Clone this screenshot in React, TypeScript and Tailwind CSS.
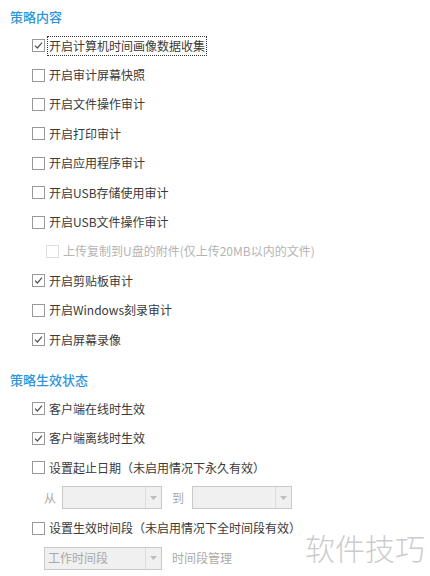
import React from "react";

const font = { fontFamily: '"Microsoft YaHei", "Noto Sans CJK SC", "Noto Sans", sans-serif' };

type CheckProps = {
  label: string;
  checked?: boolean;
  disabled?: boolean;
  focused?: boolean;
  indent?: boolean;
};

const Box = ({ checked, disabled }: { checked?: boolean; disabled?: boolean }) => (
  <span
    className={
      "relative inline-flex h-[13px] w-[13px] shrink-0 items-center justify-center border bg-white " +
      (disabled ? "border-[#dedede]" : "border-[#999999]")
    }
  >
    {checked && (
      <svg viewBox="0 0 11 11" className="h-[11px] w-[11px]">
        <path d="M2 5.6 L4.4 8 L9 2.6" fill="none" stroke="#505050" strokeWidth="1.2" />
      </svg>
    )}
  </span>
);

const CheckRow = ({ label, checked, disabled, focused, indent }: CheckProps) => (
  <div className={"flex h-[29.4px] items-center " + (indent ? "pl-[46px]" : "pl-[32px]")}>
    <Box checked={checked} disabled={disabled} />
    <span
      className={
        "ml-[2px] px-[1px] leading-[18px] text-[12px] " +
        (disabled ? "text-[#b4b4b4]" : "text-[#3a3a3a]") +
        (focused ? " border border-dotted border-[#333]" : " border border-transparent")
      }
    >
      {label}
    </span>
  </div>
);

const Combo = ({ text, width }: { text?: string; width: string }) => (
  <div className={"flex h-[23px] items-stretch border border-[#c9c9c9] bg-[#f0f0f0] " + width}>
    <div className="flex flex-1 items-center pl-[3px] text-[12px] text-[#a8a8a8]">{text}</div>
    <div className="flex w-[16px] items-center justify-center border-l border-[#dcdcdc]">
      <svg viewBox="0 0 7 4" className="h-[4px] w-[7px]">
        <path d="M0 0 L7 0 L3.5 4 Z" fill="#bdbdbd" />
      </svg>
    </div>
  </div>
);

const Heading = ({ children }: { children: React.ReactNode }) => (
  <div className="flex h-[28px] items-center pl-[10px] text-[13px] font-medium text-[#2f95d8]">{children}</div>
);

export default function App() {
  return (
    <div className="relative h-[576px] w-[430px] overflow-hidden bg-white pt-[3px]" style={font}>
      <Heading>策略内容</Heading>
      <CheckRow label="开启计算机时间画像数据收集" checked focused />
      <CheckRow label="开启审计屏幕快照" />
      <CheckRow label="开启文件操作审计" />
      <CheckRow label="开启打印审计" />
      <CheckRow label="开启应用程序审计" />
      <CheckRow label="开启USB存储使用审计" />
      <CheckRow label="开启USB文件操作审计" />
      <CheckRow label="上传复制到U盘的附件(仅上传20MB以内的文件)" disabled indent />
      <CheckRow label="开启剪贴板审计" checked />
      <CheckRow label="开启Windows刻录审计" />
      <CheckRow label="开启屏幕录像" checked />

      <div className="mt-[11px]">
        <Heading>策略生效状态</Heading>
      </div>
      <div className="mt-[1px]">
        <CheckRow label="客户端在线时生效" checked />
        <CheckRow label="客户端离线时生效" checked />
        <CheckRow label="设置起止日期（未启用情况下永久有效）" />
      </div>
      <div className="flex h-[31px] items-center pl-[44px] text-[12px] text-[#aaaaaa]">
        <span className="w-[18px]">从</span>
        <Combo width="w-[100px]" />
        <span className="ml-[10px] w-[20px]">到</span>
        <Combo width="w-[100px]" />
      </div>
      <CheckRow label="设置生效时间段（未启用情况下全时间段有效）" />
      <div className="flex h-[31px] items-center pl-[44px] text-[12px] text-[#aaaaaa]">
        <Combo text="工作时间段" width="w-[118px]" />
        <span className="ml-[10px]">时间段管理</span>
      </div>

      <div className="absolute left-[305px] top-[527px] text-[30px] font-light leading-[40px] text-[#cccccc]">软件技巧</div>
    </div>
  );
}
